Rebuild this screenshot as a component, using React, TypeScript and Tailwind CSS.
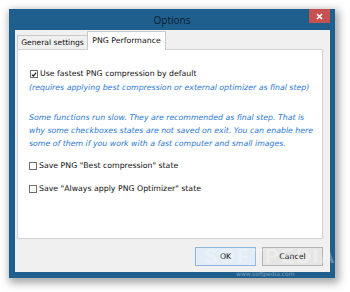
import React from "react";

function Box({ checked }: { checked?: boolean }) {
  return (
    <span className="w-[8px] h-[8px] border border-[#6f6f6f] bg-white flex items-center justify-center shrink-0">
      {checked && (
        <svg width="7" height="7" viewBox="0 0 7 7">
          <path d="M1 3.6 L2.8 5.4 L6 1.2" stroke="#1a1a1a" strokeWidth="1.4" fill="none" />
        </svg>
      )}
    </span>
  );
}

export default function App() {
  return (
    <div
      className="w-[350px] h-[292px] bg-white pl-[9px] pt-[9px] overflow-hidden relative"
      style={{ fontFamily: '"DejaVu Sans", Verdana, sans-serif' }}
    >
      <div className="w-[326px] h-[269px] bg-[#1f5f8e] flex flex-col shadow-[2px_3px_8px_2px_rgba(0,0,0,0.35)]">
        {/* title bar */}
        <div className="h-[21px] relative flex items-center justify-center shrink-0">
          <span
            className="text-[10px] text-[#0c1c2e] leading-none"
            style={{ fontFamily: '"Open Sans", "Noto Sans", sans-serif' }}
          >
            Options
          </span>
          <div className="absolute right-[5px] top-0 w-[21px] h-[14px] bg-[#c75050] flex items-center justify-center">
            <svg width="7" height="7" viewBox="0 0 7 7">
              <path d="M1 1 L6 6 M6 1 L1 6" stroke="#ffffff" strokeWidth="1.6" />
            </svg>
          </div>
        </div>
        {/* client */}
        <div className="flex-1 bg-[#f0f0f0] ml-[6px] mr-[5px] mb-[6px] flex flex-col">
          <div className="pl-[2px] pr-[7px] pt-[1px]">
            <div className="h-[18px] flex items-end">
              <div className="w-[71px] h-[14px] border border-b-0 border-[#c9c9c9] bg-[#f0f0f0] flex items-center justify-center text-[7.6px] text-[#111] leading-none">
                General settings
              </div>
              <div className="w-[79px] h-[19px] -mb-px border border-b-0 border-[#c9c9c9] bg-white flex items-center justify-center text-[7.8px] text-[#111] leading-none relative z-10 -ml-px">
                PNG Performance
              </div>
            </div>
            <div className="h-[190px] bg-white border border-[#d2d2d2] pl-[11px] pt-[18px] text-[7.8px] text-[#111]">
              <div className="h-[12px] flex items-center ml-[1px] gap-[2px]">
                <Box checked />
                <span className="whitespace-nowrap">Use fastest PNG compression by default</span>
              </div>
              <div className="h-[12px] mt-[2px] flex items-center italic text-[#2b79d3] whitespace-nowrap">
                (requires applying best compression or external optimizer as final step)
              </div>
              <div className="mt-[17px] italic text-[#2b79d3] leading-[13px] whitespace-nowrap">
                Some functions run slow. They are recommended as final step. That is
                <br />
                why some checkboxes states are not saved on exit. You can enable here
                <br />
                some of them if you work with a fast computer and small images.
              </div>
              <div className="h-[12px] mt-[10px] flex items-center gap-[2px]">
                <Box />
                <span className="whitespace-nowrap">Save PNG "Best compression" state</span>
              </div>
              <div className="h-[12px] mt-[11px] flex items-center gap-[2px]">
                <Box />
                <span className="whitespace-nowrap">Save "Always apply PNG Optimizer" state</span>
              </div>
            </div>
          </div>
          <div className="flex-1 flex justify-end items-start pt-[8px] pr-[7px] gap-[6px]">
            <div className="w-[61px] h-[19px] border border-[#8fb6dc] bg-[#e3edf7] flex items-center justify-center text-[7.8px] text-[#111]">
              OK
            </div>
            <div className="w-[61px] h-[19px] border border-[#b4b4b4] bg-[#e6e6e6] flex items-center justify-center text-[7.8px] text-[#111]">
              Cancel
            </div>
          </div>
        </div>
      </div>
      {/* watermark */}
      <div className="absolute left-[204px] top-[246px] text-[20px] font-bold tracking-[2px] text-white/30 leading-none pointer-events-none" style={{ fontFamily: '"Liberation Sans", sans-serif' }}>
        SOFTPEDIA
      </div>
      <div className="absolute left-[236px] top-[271px] text-[6px] text-white/40 leading-none pointer-events-none">
        www.softpedia.com
      </div>
    </div>
  );
}
